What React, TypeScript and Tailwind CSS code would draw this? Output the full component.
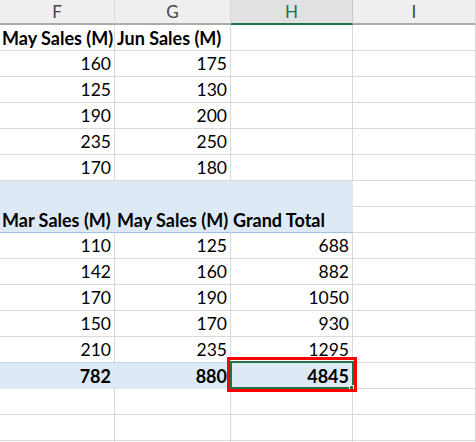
import React from 'react';

type Row = {
  cells: string[];
  bold?: boolean;
  blue?: boolean;
  head?: boolean;
  line?: string;
};

const cols = ['F', 'G', 'H', 'I'];
const widths = ['w-[115px]', 'w-[116px]', 'w-[122px]', 'flex-1'];

const rows: Row[] = [
  { cells: ['May Sales (M)', 'Jun Sales (M)', '', ''], bold: true, head: true },
  { cells: ['160', '175', '', ''] },
  { cells: ['125', '130', '', ''] },
  { cells: ['190', '200', '', ''] },
  { cells: ['235', '250', '', ''] },
  { cells: ['170', '180', '', ''] },
  { cells: ['', '', '', ''], blue: true },
  { cells: ['Mar Sales (M)', 'May Sales (M)', 'Grand Total', ''], bold: true, head: true, blue: true, line: 'border-b-[#9bc2e6]' },
  { cells: ['110', '125', '688', ''] },
  { cells: ['142', '160', '882', ''] },
  { cells: ['170', '190', '1050', ''] },
  { cells: ['150', '170', '930', ''] },
  { cells: ['210', '235', '1295', ''], line: 'border-b-[#bdd7ee]' },
  { cells: ['782', '880', '4845', ''], bold: true, blue: true },
  { cells: ['', '', '', ''] },
  { cells: ['', '', '', ''] },
  { cells: ['', '', '', ''] },
];

function Cell({ value, row, col }: { value: string; row: Row; col: number }) {
  const filled = row.blue && col < 3;
  const border = filled ? 'border-[#dde9f5]' : 'border-[#dadada]';
  return (
    <div
      className={`${widths[col]} h-[26px] shrink-0 border-r border-b ${border} ${
        col < 3 && row.line ? row.line : ''
      } ${filled ? 'bg-[#dde9f5]' : 'bg-white'} flex items-end overflow-hidden whitespace-nowrap pl-[2px] pr-[3px] pb-[1px] leading-[22px] ${
        row.head ? 'justify-start' : 'justify-end'
      } ${row.bold ? 'font-bold text-[18px]' : 'text-[17.5px]'}`}
    >
      {value}
    </div>
  );
}

export default function App() {
  return (
    <div
      className="relative w-[476px] h-[442px] overflow-hidden bg-white text-black"
      style={{ fontFamily: 'Lato, "Open Sans", sans-serif' }}
    >
      <div className="flex h-[25px]">
        {cols.map((c, i) => (
          <div
            key={c}
            className={`${widths[i]} shrink-0 flex items-center justify-center text-[17px] border-b-2 ${
              c === 'H'
                ? 'bg-[#e1e1e1] text-[#217346] border-b-[#217346] border-r border-r-[#c6c6c6]'
                : 'bg-[#efefef] text-[#444444] border-b-[#ababab] border-r border-r-[#d9d9d9]'
            }`}
          >
            {c}
          </div>
        ))}
      </div>

      {rows.map((row, r) => (
        <div key={r} className="flex">
          {row.cells.map((v, i) => (
            <Cell key={i} value={v} row={row} col={i} />
          ))}
        </div>
      ))}

      {/* selected cell + annotation */}
      <div className="absolute left-[230px] top-[361px] w-[124px] h-[28px] border-2 border-[#217346]" />
      <div className="absolute left-[349px] top-[385px] w-[5px] h-[5px] bg-[#217346] border border-white" />
      <div className="absolute left-[227px] top-[357px] w-[130px] h-[35px] border-[3px] border-[#ff0000]" />
    </div>
  );
}
